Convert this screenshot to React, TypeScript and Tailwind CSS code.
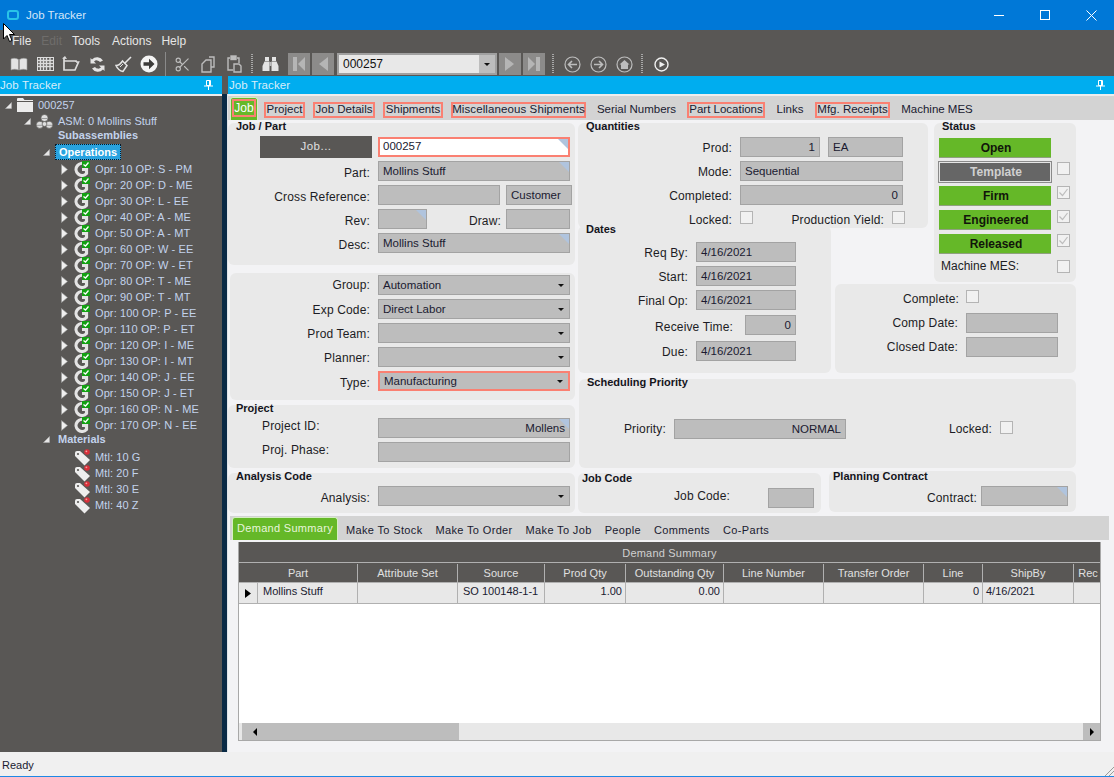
import React from "react";
import { Scissors } from "lucide-react";

const Corner = () => (
  <span className="absolute top-0 right-0 w-[10px] h-[10px] bg-[#b0c4de] [clip-path:polygon(0_0,100%_0,100%_100%)]" />
);

const Caret = () => (
  <svg width="6" height="3" viewBox="0 0 6 3" className="shrink-0"><polygon points="0,0 6,0 3,3" fill="#111" /></svg>
);

function Field({ className = "", children, corner, drop, right, top }: { className?: string; children?: React.ReactNode; corner?: boolean; drop?: boolean; right?: boolean; top?: boolean }) {
  return (
    <div className={`relative h-5 shrink-0 bg-[#bdbdbd] border border-[#a3a3a3] flex px-1 text-[#1a1a30] ${top ? "items-start pt-px" : "items-center"} ${right ? "justify-end" : "justify-between"} ${className}`}>
      <span className="leading-[16px]">{children}</span>
      {drop && <span className="mr-px"><Caret /></span>}
      {corner && <Corner />}
    </div>
  );
}

function Label({ className = "", children }: { className?: string; children: React.ReactNode }) {
  return <div className={`text-right shrink-0 text-[12px] tracking-[0.15px] pt-1 text-[#1c1c24] whitespace-nowrap ${className}`}>{children}</div>;
}

function Check({ checked, className = "" }: { checked?: boolean; className?: string }) {
  return (
    <span className={`inline-flex items-center justify-center w-[13px] h-[13px] shrink-0 bg-[#f1f1f1] border border-[#b4b4b4] ${className}`}>
      {checked && <svg width="11" height="11" viewBox="0 0 11 11"><path d="M1.5 5.5 L4.5 8.5 L9.5 2" fill="none" stroke="#bdbdbd" strokeWidth="1.2" /></svg>}
    </span>
  );
}

function Title({ className = "", children }: { className?: string; children: React.ReactNode }) {
  return <div className={`h-[14px] leading-[14px] text-[11px] font-bold text-[#14141c] whitespace-nowrap ${className}`}>{children}</div>;
}

const Panel = ({ className = "", children }: { className?: string; children: React.ReactNode }) => (
  <div className={`bg-[#e9e9e9] rounded-md relative shrink-0 ${className}`}>{children}</div>
);

function Row({ className = "", children }: { className?: string; children: React.ReactNode }) {
  return <div className={`flex items-center h-5 shrink-0 ${className}`}>{children}</div>;
}

function StatusBtn({ children, dark }: { children: string; dark?: boolean }) {
  return (
    <div className={`h-5 w-[112px] pl-[2px] flex items-center justify-center font-bold text-[12px] ${dark ? "bg-[#666666] text-[#d0d0d0] border border-[#e6e6e6] outline outline-1 outline-[#8a8a8a]" : "bg-[#65b828] text-[#11150a] border-b border-[#8fa07f]"}`}>
      {children}
    </div>
  );
}

/* ---------- toolbar icons ---------- */
const tbStroke = "#dcdcdc";
const BookIcon = () => (
  <svg width="18" height="16" viewBox="0 0 18 16"><path d="M1 3 C3 2 6 2 8.5 3.5 V14 C6 13 3 13 1 14 Z M17 3 C15 2 12 2 9.5 3.5 V14 C12 13 15 13 17 14 Z" fill="#e4e4e4" stroke="#9a9a9a" strokeWidth=".6" /></svg>
);
const TableIcon = () => (
  <svg width="17" height="14" viewBox="0 0 17 14"><rect x="0.5" y="0.5" width="16" height="13" fill="#595755" stroke={tbStroke} /><path d="M0 3.5H17M0 6.5H17M0 9.5H17M3.5 0V14M6.5 0V14M9.5 0V14M13 0V14" stroke={tbStroke} strokeWidth="1.4" /></svg>
);
const FolderIcon = () => (
  <svg width="18" height="16" viewBox="0 0 18 16"><path d="M2 2 V14 H13 L16.5 6 H14 M2 5 H14 V6" fill="none" stroke={tbStroke} strokeWidth="1.7" /><path d="M0 2.5 L3 0 L5 3" fill={tbStroke} /></svg>
);
const RefreshIcon = () => (
  <svg width="17" height="17" viewBox="0 0 17 17"><path d="M14 4.5 A7 7 0 0 0 3 3.5 L1.5 2 V7.5 H7 L5 5.5 A4 4 0 0 1 11 6 Z M3 12.5 A7 7 0 0 0 14 13.5 L15.5 15 V9.5 H10 L12 11.5 A4 4 0 0 1 6 11 Z" fill="#e4e4e4" /></svg>
);
const BroomIcon = () => (
  <svg width="17" height="17" viewBox="0 0 17 17"><path d="M16 1 L9.5 7.5" stroke="#e4e4e4" strokeWidth="1.6" /><path d="M7.5 5 L12 9.5 L8 15.5 C5.5 15 2.5 13 1 9.5 C3.5 9.5 5.5 8 7.5 5 Z" fill="none" stroke="#e4e4e4" strokeWidth="1.5" /><path d="M5 11 L8 8" stroke="#e4e4e4" /></svg>
);
const ArrowCircle = () => (
  <svg width="18" height="18" viewBox="0 0 18 18"><circle cx="9" cy="9" r="8.5" fill="#f4f4f4" /><path d="M3.5 7.3 H9 V3.8 L14.5 9 L9 14.2 V10.7 H3.5 Z" fill="#3b3a39" /></svg>
);
const CopyIcon = () => (
  <svg width="14" height="17" viewBox="0 0 14 17" fill="none" stroke="#bdbdbd" strokeWidth="1.4"><path d="M8 1 H13 V11 H10" /><path d="M5 4 H10 V16 H1 V8 Z" /></svg>
);
const PasteIcon = () => (
  <svg width="15" height="18" viewBox="0 0 15 18" fill="none" stroke="#bdbdbd" strokeWidth="1.4"><path d="M3 3 H1 V15 H6 M10 3 H12 V8" /><rect x="4" y="1" width="5" height="3.5" fill="#bdbdbd" /><path d="M7 9 H12 L14 11 V17 H7 Z" /></svg>
);
const BinocularsIcon = () => (
  <svg width="17" height="16" viewBox="0 0 17 16" fill="#e4e4e4">
    <rect x="3" y="1" width="4" height="4" />
    <rect x="10" y="1" width="4" height="4" />
    <path d="M2.5 5.5 H7.5 V15 H0.5 V10 Z" />
    <path d="M9.5 5.5 H14.5 L16.5 10 V15 H9.5 Z" />
    <rect x="7.5" y="6" width="2" height="4" fill="#bdbdbd" />
  </svg>
);
const Grip = ({ className = "" }: { className?: string }) => (
  <span className={`w-[2px] h-[20px] shrink-0 bg-[repeating-linear-gradient(to_bottom,#a8a8a8_0,#a8a8a8_1px,transparent_1px,transparent_2px)] ${className}`} />
);
const NavBtn = ({ className = "", points, bar }: { className?: string; points: string; bar?: number }) => (
  <span className={`w-[22px] h-[22px] shrink-0 bg-[#8c8b8a] flex items-center justify-center ${className}`}>
    <svg width="14" height="16" viewBox="0 0 14 16"><polygon points={points} fill="#b5b5b5" />{bar !== undefined && <rect x={bar} y="1" width="4" height="14" fill="#b5b5b5" />}</svg>
  </span>
);
const CircNav = ({ kind }: { kind: "back" | "fwd" | "home" }) => (
  <svg width="17" height="17" viewBox="0 0 17 17" fill="none" stroke="#bdbdbd">
    <circle cx="8.5" cy="8.5" r="7.5" strokeWidth="1.2" />
    {kind === "back" && <path d="M13 8.5 H5 M8 5 L4.5 8.5 L8 12" strokeWidth="1.6" />}
    {kind === "fwd" && <path d="M4 8.5 H12 M9 5 L12.5 8.5 L9 12" strokeWidth="1.6" />}
    {kind === "home" && <path d="M3.5 8.5 L8.5 4 L13.5 8.5 H12 V13 H5 V8.5 Z" fill="#bdbdbd" stroke="none" />}
  </svg>
);
const Slot = ({ className = "", children }: { className?: string; children: React.ReactNode }) => (
  <span className={`w-[26px] h-6 shrink-0 flex items-center justify-center ${className}`}>{children}</span>
);

/* ---------- tree icons ---------- */
const Expanded = () => (
  <svg width="7" height="7" viewBox="0 0 7 7" className="shrink-0"><polygon points="6.5,0.5 6.5,6.5 0.5,6.5" fill="#e6e6e6" stroke="#b5b5b5" strokeWidth=".5" /></svg>
);
const Collapsed = () => (
  <svg width="7" height="11" viewBox="0 0 7 11" className="shrink-0"><polygon points="0.5,0.5 6.5,5.5 0.5,10.5" fill="#f0f0f0" stroke="#9a9a9a" strokeWidth=".6" /></svg>
);
const TreeFolder = () => (
  <svg width="17" height="14" viewBox="0 0 17 14" className="shrink-0"><path d="M0 3 V1 Q0 0 1 0 H6 L7.5 2 H16 V3 Z" fill="#ececec" /><rect x="0" y="4" width="16" height="10" fill="#ececec" /></svg>
);
const Balls = () => (
  <svg width="17" height="15" viewBox="0 0 17 15" className="shrink-0" fill="#dedede" stroke="#595755" strokeWidth=".7"><circle cx="8.5" cy="4" r="3.6" /><circle cx="3.8" cy="10.8" r="3.6" /><circle cx="13.2" cy="10.8" r="3.6" /><circle cx="8.5" cy="10" r="2.4" /><path d="M5.5 4.5 H11.5 M1 11.3 H6.6 M10.4 11.3 H16" fill="none" stroke="#8a8a8a" strokeWidth=".8" /></svg>
);
const GIcon = () => (
  <svg width="16" height="16" viewBox="0 0 16 16" className="shrink-0">
    <path d="M11.5 3.5 A6 6 0 1 0 12.5 12.5 V8.5 H8" fill="none" stroke="#e4e4e4" strokeWidth="3.2" />
    <rect x="8" y="0" width="8" height="7" fill="#12a012" />
    <path d="M9.5 3.5 L11.5 5 L14.5 1.5" fill="none" stroke="#fff" strokeWidth="1.3" />
  </svg>
);
const TagIcon = () => (
  <svg width="17" height="17" viewBox="0 0 17 17" className="shrink-0">
    <path d="M1 4 Q1 2 3 2 H6 L16 11 L10.5 16.5 L1 7 Z" fill="#eeeeee" />
    <circle cx="4" cy="5" r="1.1" fill="#595755" />
    <circle cx="13" cy="3" r="2.8" fill="#d8303a" />
    <circle cx="12.4" cy="2.3" r="0.9" fill="#f4a0a0" />
  </svg>
);

const oprs = ["10 OP: S - PM","20 OP: D - ME","30 OP: L - EE","40 OP: A - ME","50 OP: A - MT","60 OP: W - EE","70 OP: W - ET","80 OP: T - ME","90 OP: T - MT","100 OP: P - EE","110 OP: P - ET","120 OP: I - ME","130 OP: I - MT","140 OP: J - EE","150 OP: J - ET","160 OP: N - ME","170 OP: N - EE"];
const mtls = ["10 G","20 F","30 E","40 Z"];

const Pin = () => (
  <svg width="9" height="10" viewBox="0 0 9 10"><path d="M2.5 0.5 H6.5 V5.5 H2.5 Z M0 6 H9 M4.5 6 V10 M5.5 1 V5" fill="none" stroke="#fff" strokeWidth="1" /></svg>
);

function Tree() {
  return (
    <div className="flex-1 bg-[#595755] text-[11px] text-[#c3d3ec] pt-px overflow-hidden">
      <div className="h-4 flex items-center pl-[5px]"><Expanded /><span className="ml-[5px]"><TreeFolder /></span><span className="ml-[4px]">000257</span></div>
      <div className="h-4 flex items-center pl-6"><Expanded /><span className="ml-[5px]"><Balls /></span><span className="ml-[5px]">ASM: 0 Mollins Stuff</span></div>
      <div className="h-[13px] flex items-center pl-[58px] font-bold">Subassemblies</div>
      <div className="h-4 mt-[2px] flex items-center pl-[43px]">
        <Expanded />
        <span className="ml-[5px] w-[66px] h-4 flex items-center justify-center bg-[#29a3e0] border border-dotted border-[#0a1a2a] text-white font-bold">Operations</span>
      </div>
      <div className="mt-px">
        {oprs.map((o) => (
          <div key={o} className="h-4 flex items-center pl-[61px]"><Collapsed /><span className="ml-[6px]"><GIcon /></span><span className="ml-[5px] tracking-[0.1px]">Opr: {o}</span></div>
        ))}
      </div>
      <div className="h-3 flex items-center pl-[43px]"><Expanded /><span className="ml-[8px] font-bold">Materials</span></div>
      <div className="mt-1">
        {mtls.map((m) => (
          <div key={m} className="h-4 flex items-center pl-[74px]"><TagIcon /><span className="ml-1 tracking-[0.1px]">Mtl: {m}</span></div>
        ))}
      </div>
    </div>
  );
}

function MainTab({ className = "", children, boxed }: { className?: string; children: string; boxed?: boolean }) {
  return (
    <div className={`h-4 mt-[6px] shrink-0 flex items-center justify-center whitespace-nowrap text-[#1a1a30] ${boxed ? "border-2 border-[#fa8072]" : ""} ${className}`}>
      {children}
    </div>
  );
}

function LeftForms() {
  return (
    <div className="w-[347px] shrink-0 flex flex-col">
      <Panel className="mt-[3px] h-[142px]">
        <Title className="ml-2 -mt-[4px]">Job / Part</Title>
        <div className="mt-1 flex flex-col gap-1">
          <Row>
            <div className="ml-8 w-[112px] h-[22px] bg-[#595755] text-[#e0e0e0] flex items-center justify-center tracking-[0.5px]">Job...</div>
            <div className="ml-[6px] w-[192px] h-5 relative bg-white border-2 border-[#fa8072] flex items-center px-[3px] text-[#1a1a30]">000257<Corner /></div>
          </Row>
          <Row><Label className="w-[142px]">Part:</Label><Field className="ml-2 w-[192px]" corner>Mollins Stuff</Field></Row>
          <Row><Label className="w-[142px]">Cross Reference:</Label><Field className="ml-2 w-[122px]" /><Field className="ml-[6px] w-[66px]">Customer</Field></Row>
          <Row><Label className="w-[142px]">Rev:</Label><Field className="ml-2 w-[49px]" corner /><Label className="w-[74px]">Draw:</Label><Field className="ml-[5px] w-[64px]" /></Row>
          <Row><Label className="w-[142px]">Desc:</Label><Field className="ml-2 w-[192px]" corner top>Mollins Stuff</Field></Row>
        </div>
      </Panel>
      <Panel className="mt-2 ml-[2px] w-[345px] h-[127px] pt-[2px] flex flex-col gap-1">
        <Row><Label className="w-[140px] !pt-0">Group:</Label><Field className="ml-2 w-[192px]" drop>Automation</Field></Row>
        <Row><Label className="w-[140px] !pt-px">Exp Code:</Label><Field className="ml-2 w-[192px]" drop>Direct Labor</Field></Row>
        <Row><Label className="w-[140px] !pt-px">Prod Team:</Label><Field className="ml-2 w-[192px]" drop /></Row>
        <Row><Label className="w-[140px] !pt-px">Planner:</Label><Field className="ml-2 w-[192px]" drop /></Row>
        <Row><Label className="w-[140px]">Type:</Label><Field className="ml-2 w-[192px] !border-2 !border-[#fa8072]" drop>Manufacturing</Field></Row>
      </Panel>
      <Panel className="mt-[5px] h-[63px]">
        <Title className="ml-2 -mt-[4px]">Project</Title>
        <div className="flex flex-col gap-1 mt-[3px]">
          <Row><Label className="ml-[34px] w-[116px] !text-left -mt-2">Project ID:</Label><Field className="w-[192px]" corner right>Mollens</Field></Row>
          <Row><Label className="ml-[34px] w-[116px] !text-left -mt-2">Proj. Phase:</Label><Field className="w-[192px]" /></Row>
        </div>
      </Panel>
      <Panel className="mt-[5px] h-10">
        <Title className="ml-2 -mt-[4px]">Analysis Code</Title>
        <Row className="mt-[3px]"><Label className="w-[142px]">Analysis:</Label><Field className="ml-2 w-[192px]" drop /></Row>
      </Panel>
    </div>
  );
}

function RightForms() {
  return (
    <div className="ml-[3px] w-[498px] shrink-0 flex flex-col">
      <div className="mt-[3px] grid grid-cols-[253px_4px_93px_6px_142px] grid-rows-[103px_56px_2px_89px]">
        <Panel className="col-start-1 col-span-3 row-start-1 h-[105px]">
          <Title className="ml-2 -mt-[4px]">Quantities</Title>
          <div className="mt-1 flex flex-col gap-1">
            <Row><Label className="w-[154px] !pt-[2px]">Prod:</Label><Field className="ml-2 w-[80px]" right>1</Field><Field className="ml-2 w-[75px]">EA</Field></Row>
            <Row><Label className="w-[154px] !pt-[2px]">Mode:</Label><Field className="ml-2 w-[163px]">Sequential</Field></Row>
            <Row><Label className="w-[154px] !pt-[2px]">Completed:</Label><Field className="ml-2 w-[163px]" right>0</Field></Row>
            <Row><Label className="w-[154px] !pt-[2px]">Locked:</Label><Check className="ml-2 -mt-[3px]" /><Label className="w-[131px] !pt-[2px]">Production Yield:</Label><Check className="ml-2 -mt-[3px]" /></Row>
          </div>
        </Panel>
        <Panel className="col-start-5 row-start-1 row-span-2 h-[159px]">
          <Title className="ml-2 -mt-[4px]">Status</Title>
          <div className="mt-[5px] ml-[5px] flex flex-col gap-1">
            <StatusBtn>Open</StatusBtn>
            <Row><StatusBtn dark>Template</StatusBtn><Check className="ml-[6px] -mt-[7px]" /></Row>
            <Row><StatusBtn>Firm</StatusBtn><Check className="ml-[6px] -mt-[7px]" checked /></Row>
            <Row><StatusBtn>Engineered</StatusBtn><Check className="ml-[6px] -mt-[7px]" checked /></Row>
            <Row><StatusBtn>Released</StatusBtn><Check className="ml-[6px] -mt-[7px]" checked /></Row>
            <Row className="-mt-[2px]"><span className="ml-[2px] w-[116px] text-[12px] text-[#1c1c24]">Machine MES:</span><Check /></Row>
          </div>
        </Panel>
        <Panel className="col-start-1 row-start-2 row-span-3 z-10 h-[147px]">
          <Title className="ml-2 -mt-[4px]">Dates</Title>
          <div className="mt-[6px] flex flex-col gap-1">
            <Row><Label className="w-[110px] !pt-[2px]">Req By:</Label><Field className="ml-2 w-[100px]">4/16/2021</Field></Row>
            <Row><Label className="w-[110px] !pt-[2px]">Start:</Label><Field className="ml-2 w-[100px]">4/16/2021</Field></Row>
            <Row><Label className="w-[110px] !pt-[2px]">Final Op:</Label><Field className="ml-2 w-[100px]">4/16/2021</Field></Row>
            <Row className="mt-px"><Label className="w-[155px]">Receive Time:</Label><Field className="ml-3 w-[51px]" right>0</Field></Row>
            <Row className="mt-[2px]"><Label className="w-[110px] !pt-[2px]">Due:</Label><Field className="ml-2 w-[100px]">4/16/2021</Field></Row>
          </div>
        </Panel>
        <Panel className="col-start-3 col-span-3 row-start-4 h-[89px] pt-[6px]">
          <Row className="h-[13px]"><Label className="w-[124px]">Complete:</Label><Check className="ml-[7px]" /></Row>
          <Row className="mt-[10px]"><Label className="w-[123px] !pt-0">Comp Date:</Label><Field className="ml-2 w-[92px]" /></Row>
          <Row className="mt-1"><Label className="w-[123px] !pt-0">Closed Date:</Label><Field className="ml-2 w-[92px]" /></Row>
        </Panel>
      </div>
      <Panel className="mt-[6px] ml-px w-[497px] h-[89px]">
        <Title className="ml-2 -mt-[4px]">Scheduling Priority</Title>
        <Row className="mt-[30px]">
          <Label className="w-[87px] !pt-0">Priority:</Label>
          <Field className="ml-2 w-[172px]" right>NORMAL</Field>
          <Label className="w-[146px] !pt-0">Locked:</Label>
          <Check className="ml-2 -mt-1" />
        </Row>
      </Panel>
      <div className="flex mt-[3px]">
        <Panel className="w-[243px] h-10 mt-[2px]">
          <Title className="ml-1 -mt-[2px]">Job Code</Title>
          <Row className="mt-[3px]"><Label className="w-[152px] !pt-0 -mt-1">Job Code:</Label><Field className="ml-[38px] w-[46px]" /></Row>
        </Panel>
        <Panel className="ml-2 w-[247px] h-[41px]">
          <Title className="ml-1 -mt-[2px]">Planning Contract</Title>
          <Row className="mt-[3px]"><Label className="w-[148px]">Contract:</Label><Field className="ml-1 w-[87px]" corner /></Row>
        </Panel>
      </div>
    </div>
  );
}

const cols = ["Attribute Set", "Source", "Prod Qty", "Outstanding Qty", "Line Number", "Transfer Order", "Line", "ShipBy", "Rec"];

function DemandGrid() {
  return (
    <div className="ml-[10px] mt-[2px] w-[863px] h-[199px] border-b border-x border-[#a8a8a8] bg-white flex flex-col text-[11px]">
      <div className="h-[21px] pt-[3px] bg-[#595755] text-[#d0d0d0] flex items-center justify-center border-b border-[#b0b0b0] tracking-[0.2px]">Demand Summary</div>
      <div className="grid grid-cols-[19px_100px_100px_87px_81px_98px_100px_100px_59px_91px_28px] h-[20px] pt-px bg-[#595755] text-[#e0e0e0] border-b border-[#b0b0b0]">
        <div className="col-span-2 border-r border-[#b0b0b0] flex items-center justify-center">Part</div>
        {cols.map((c, i) => (
          <div key={c} className={`flex items-center justify-center overflow-hidden whitespace-nowrap ${i < 8 ? "border-r border-[#b0b0b0]" : ""}`}>{c}</div>
        ))}
      </div>
      <div className="grid grid-cols-[19px_100px_100px_87px_81px_98px_100px_100px_59px_91px_28px] h-[21px] bg-[#e8e8e8] text-[#1a1a30] border-b border-[#b0b0b0]">
        <div className="border-r border-[#b0b0b0] flex items-center justify-center"><svg width="6" height="9" viewBox="0 0 6 9"><polygon points="0,0 6,4.5 0,9" fill="#000" /></svg></div>
        <div className="border-r border-[#b0b0b0] px-[5px] leading-[16px]">Mollins Stuff</div>
        <div className="border-r border-[#b0b0b0]" />
        <div className="border-r border-[#b0b0b0] px-[5px] leading-[16px] whitespace-nowrap">SO 100148-1-1</div>
        <div className="border-r border-[#b0b0b0] px-[3px] text-right leading-[16px]">1.00</div>
        <div className="border-r border-[#b0b0b0] px-[3px] text-right leading-[16px]">0.00</div>
        <div className="border-r border-[#b0b0b0]" />
        <div className="border-r border-[#b0b0b0]" />
        <div className="border-r border-[#b0b0b0] px-[3px] text-right leading-[16px]">0</div>
        <div className="border-r border-[#b0b0b0] px-[3px] leading-[16px]">4/16/2021</div>
        <div />
      </div>
      <div className="flex-1" />
      <div className="h-[17px] bg-[#e8e8e8] flex items-center">
        <div className="w-[220px] h-full bg-[#bdbdbd] flex items-center pl-[11px] border-l-[3px] border-[#e8e8e8]"><svg width="4" height="8" viewBox="0 0 4 8"><polygon points="4,0 0,4 4,8" fill="#000" /></svg></div>
        <div className="flex-1" />
        <div className="w-[17px] h-full bg-[#bdbdbd] flex items-center justify-center"><svg width="4" height="8" viewBox="0 0 4 8"><polygon points="0,0 4,4 0,8" fill="#000" /></svg></div>
      </div>
    </div>
  );
}

export default function App() {
  return (
    <div className="relative w-[1114px] h-[777px] overflow-hidden flex flex-col bg-[#f3f3f5] text-[11.5px] [font-family:'Liberation_Sans',Arial,sans-serif]">
      {/* title bar */}
      <div className="h-[30px] shrink-0 bg-[#0078d7] flex items-center text-[11.5px] text-[#d4e6f7]">
        <span className="ml-[7px] w-[12px] h-[10px] rounded-[3px] border-2 border-[#29c3e8]" />
        <span className="ml-[7px] pt-[2px]">Job Tracker</span>
        <div className="ml-auto flex items-center">
          <span className="w-[46px] h-[30px] flex items-center justify-center"><span className="w-[10px] h-px bg-white" /></span>
          <span className="w-[46px] h-[30px] flex items-center justify-center"><span className="w-[10px] h-[10px] border border-white" /></span>
          <span className="w-[46px] h-[30px] flex items-center justify-center"><svg width="11" height="11" viewBox="0 0 11 11"><path d="M.5.5L10.5 10.5M10.5.5L.5 10.5" stroke="#fff" /></svg></span>
        </div>
      </div>
      {/* menu bar */}
      <div className="h-[22px] shrink-0 bg-[#595755] flex items-center text-[12px] text-[#e6e6e6] pl-[12px]">
        <span>File</span>
        <span className="ml-[10px] text-[#6f6d6b]">Edit</span>
        <span className="ml-[10px]">Tools</span>
        <span className="ml-[12px]">Actions</span>
        <span className="ml-[10px]">Help</span>
      </div>
      {/* toolbar */}
      <div className="h-6 shrink-0 bg-[#595755] flex items-center pl-[6px]">
        <Slot><BookIcon /></Slot><Slot><TableIcon /></Slot><Slot><FolderIcon /></Slot><Slot><RefreshIcon /></Slot><Slot><BroomIcon /></Slot><Slot><ArrowCircle /></Slot>
        <span className="ml-[3px] w-px h-[24px] bg-[#8a8a8a]" />
        <Slot className="ml-[3px]"><Scissors size={17} color="#bdbdbd" strokeWidth={1.6} /></Slot>
        <Slot><CopyIcon /></Slot><Slot><PasteIcon /></Slot>
        <Grip className="ml-1" />
        <Slot className="ml-1"><BinocularsIcon /></Slot>
        <NavBtn className="ml-[5px]" points="13,1 6,8 13,15" bar={1} />
        <NavBtn className="ml-[2px]" points="12,1 3,8 12,15" />
        <div className="ml-[3px] w-[160px] h-[22px] bg-[#e8e8e8] border-2 border-[#a0a0a0] flex items-center justify-between text-[12px] text-[#111] pl-1">
          <span>000257</span>
          <span className="w-[16px] h-full bg-[#bdbdbd] flex items-center justify-center"><Caret /></span>
        </div>
        <NavBtn className="ml-[2px]" points="2,1 11,8 2,15" />
        <NavBtn className="ml-[2px]" points="1,1 8,8 1,15" bar={9} />
        <Grip className="ml-[7px]" />
        <Slot className="ml-[5px]"><CircNav kind="back" /></Slot>
        <Slot><CircNav kind="fwd" /></Slot>
        <Slot><CircNav kind="home" /></Slot>
        <Grip className="ml-1" />
        <Slot className="ml-[5px]">
          <svg width="15" height="15" viewBox="0 0 15 15" fill="none"><circle cx="7.5" cy="7.5" r="6.5" stroke="#f0f0f0" strokeWidth="1.4" /><polygon points="5.5,4.5 11,7.5 5.5,10.5" fill="#f0f0f0" /></svg>
        </Slot>
      </div>

      {/* workspace */}
      <div className="h-[676px] shrink-0 flex">
        {/* left dock */}
        <div className="w-[222px] shrink-0 flex flex-col">
          <div className="h-[18px] bg-[#00adef] flex items-center justify-between text-[#d8eefa] text-[11.5px] tracking-[0.1px] pr-[9px]"><span className="pt-[2px]">Job Tracker</span><Pin /></div>
          <div className="h-[2px] bg-[#ededed]" />
          <Tree />
        </div>
        {/* splitter */}
        <div className="w-[6px] shrink-0 flex flex-col bg-[#0a2a45]">
          <div className="h-[18px] bg-[#595755]" />
          <div className="flex-1 border-r border-[#dfe3e8]" />
        </div>
        {/* main */}
        <div className="flex-1 min-w-0 flex flex-col">
          <div className="h-[18px] shrink-0 bg-[#00adef] flex items-center justify-between text-[#d8eefa] text-[11.5px] tracking-[0.1px] pr-[9px]"><span className="ml-px pt-[2px]">Job Tracker</span><Pin /></div>
          <div className="h-[2px] shrink-0 bg-[#ededed]" />
          {/* tabs */}
          <div className="h-6 shrink-0 bg-[#d3d3d3] flex items-start z-20">
            <div className="ml-[2px] mt-px w-[28px] h-[23px] shrink-0 bg-[#65b828] border border-b-0 border-[#d6efc4] rounded-t-[3px] flex items-start justify-center pt-[1px]">
              <span className="w-[24px] h-[18px] border-2 border-[#fa8072] text-white text-[12px] flex items-center justify-center">Job</span>
            </div>
            <MainTab boxed className="ml-[6px] w-[41px]">Project</MainTab>
            <MainTab boxed className="ml-2 w-[62px]">Job Details</MainTab>
            <MainTab boxed className="ml-2 w-[60px]">Shipments</MainTab>
            <MainTab boxed className="ml-2 w-[135px] tracking-[0.1px]">Miscellaneous Shipments</MainTab>
            <MainTab className="ml-2 w-[85px]">Serial Numbers</MainTab>
            <MainTab boxed className="ml-2 w-[78px]">Part Locations</MainTab>
            <MainTab className="ml-2 w-[34px]">Links</MainTab>
            <MainTab boxed className="ml-2 w-[75px]">Mfg. Receipts</MainTab>
            <MainTab className="ml-2 w-[78px]">Machine MES</MainTab>
          </div>
          {/* form */}
          <div className="h-[396px] shrink-0 flex overflow-hidden">
            <LeftForms />
            <RightForms />
          </div>
          {/* lower tabs */}
          <div className="ml-[2px] w-[879px] h-6 shrink-0 bg-[#d3d3d3] flex items-end">
            <div className="ml-[2px] w-[106px] h-[23px] bg-[#65b828] border border-b-0 border-[#d6efc4] rounded-t-[3px] text-[#e8f5dc] flex items-center justify-center pb-[2px] text-[11px] tracking-[0.3px]">Demand Summary</div>
            <div className="ml-[8px] h-full flex items-center tracking-[0.35px] text-[#1a1a30] text-[11px] pt-[5px]">
              <span>Make To Stock</span>
              <span className="ml-[13px]">Make To Order</span>
              <span className="ml-[13px]">Make To Job</span>
              <span className="ml-[13px]">People</span>
              <span className="ml-[13px]">Comments</span>
              <span className="ml-[13px]">Co-Parts</span>
            </div>
          </div>
          <DemandGrid />
        </div>
      </div>

      {/* status bar */}
      <div className="h-6 shrink-0 bg-[#f0f0f0] flex items-center pl-[2px] pt-[2px] text-[#1a1a30] text-[11px] relative">
        Ready
        <svg width="10" height="10" viewBox="0 0 10 10" className="absolute right-0 bottom-0"><path d="M1 10 L10 1 M5 10 L10 5" stroke="#9a9a9a" /></svg>
      </div>
      <div className="h-px shrink-0 bg-[#1e88e5]" />

      {/* mouse cursor */}
      <svg width="13" height="20" viewBox="0 0 13 20" className="absolute left-[3px] top-[23px] z-50"><path d="M.5.5 V16 L4 12.5 L6.5 18.5 L9 17.5 L6.5 11.5 H11.5 Z" fill="#fff" stroke="#000" /></svg>
    </div>
  );
}
